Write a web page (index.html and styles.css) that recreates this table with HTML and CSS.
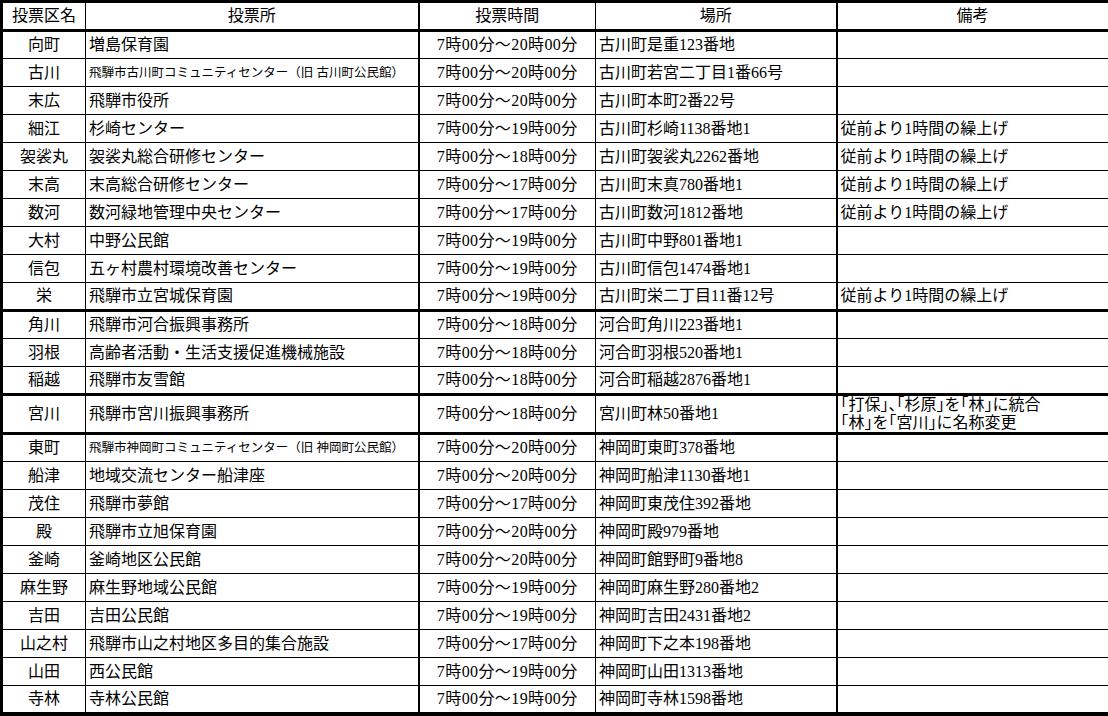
FILE: index.html
```html
<!DOCTYPE html>
<html lang="ja">
<head>
<meta charset="utf-8">
<title>投票所一覧</title>
<link rel="stylesheet" href="styles.css">
</head>
<body>
<table class="sched">
  <colgroup>
    <col class="w-name"><col class="w-place"><col class="w-time"><col class="w-addr"><col class="w-note">
  </colgroup>
  <thead>
    <tr class="hd">
      <th>投票区名</th><th>投票所</th><th>投票時間</th><th>場所</th><th>備考</th>
    </tr>
  </thead>
  <tbody>
    <tr><td class="c-name">向町</td><td class="c-place">増島保育園</td><td class="c-time">7時00分～20時00分</td><td class="c-addr">古川町是重123番地</td><td class="c-note"></td></tr>
    <tr><td class="c-name">古川</td><td class="c-place small">飛騨市古川町コミュニティセンター（旧 古川町公民館）</td><td class="c-time">7時00分～20時00分</td><td class="c-addr">古川町若宮二丁目1番66号</td><td class="c-note"></td></tr>
    <tr><td class="c-name">末広</td><td class="c-place">飛騨市役所</td><td class="c-time">7時00分～20時00分</td><td class="c-addr">古川町本町2番22号</td><td class="c-note"></td></tr>
    <tr><td class="c-name">細江</td><td class="c-place">杉崎センター</td><td class="c-time">7時00分～19時00分</td><td class="c-addr">古川町杉崎1138番地1</td><td class="c-note">従前より1時間の繰上げ</td></tr>
    <tr><td class="c-name">袈裟丸</td><td class="c-place">袈裟丸総合研修センター</td><td class="c-time">7時00分～18時00分</td><td class="c-addr">古川町袈裟丸2262番地</td><td class="c-note">従前より1時間の繰上げ</td></tr>
    <tr><td class="c-name">末高</td><td class="c-place">末高総合研修センター</td><td class="c-time">7時00分～17時00分</td><td class="c-addr">古川町末真780番地1</td><td class="c-note">従前より1時間の繰上げ</td></tr>
    <tr><td class="c-name">数河</td><td class="c-place">数河緑地管理中央センター</td><td class="c-time">7時00分～17時00分</td><td class="c-addr">古川町数河1812番地</td><td class="c-note">従前より1時間の繰上げ</td></tr>
    <tr><td class="c-name">大村</td><td class="c-place">中野公民館</td><td class="c-time">7時00分～19時00分</td><td class="c-addr">古川町中野801番地1</td><td class="c-note"></td></tr>
    <tr><td class="c-name">信包</td><td class="c-place">五ヶ村農村環境改善センター</td><td class="c-time">7時00分～19時00分</td><td class="c-addr">古川町信包1474番地1</td><td class="c-note"></td></tr>
    <tr class="grp-end"><td class="c-name">栄</td><td class="c-place">飛騨市立宮城保育園</td><td class="c-time">7時00分～19時00分</td><td class="c-addr">古川町栄二丁目11番12号</td><td class="c-note">従前より1時間の繰上げ</td></tr>
    <tr><td class="c-name">角川</td><td class="c-place">飛騨市河合振興事務所</td><td class="c-time">7時00分～18時00分</td><td class="c-addr">河合町角川223番地1</td><td class="c-note"></td></tr>
    <tr><td class="c-name">羽根</td><td class="c-place">高齢者活動・生活支援促進機械施設</td><td class="c-time">7時00分～18時00分</td><td class="c-addr">河合町羽根520番地1</td><td class="c-note"></td></tr>
    <tr class="grp-end"><td class="c-name">稲越</td><td class="c-place">飛騨市友雪館</td><td class="c-time">7時00分～18時00分</td><td class="c-addr">河合町稲越2876番地1</td><td class="c-note"></td></tr>
    <tr class="grp-end tall"><td class="c-name">宮川</td><td class="c-place">飛騨市宮川振興事務所</td><td class="c-time">7時00分～18時00分</td><td class="c-addr">宮川町林50番地1</td><td class="c-note two">「打保」、「杉原」を「林」に統合<br>「林」を「宮川」に名称変更</td></tr>
    <tr><td class="c-name">東町</td><td class="c-place small">飛騨市神岡町コミュニティセンター（旧 神岡町公民館）</td><td class="c-time">7時00分～20時00分</td><td class="c-addr">神岡町東町378番地</td><td class="c-note"></td></tr>
    <tr><td class="c-name">船津</td><td class="c-place">地域交流センター船津座</td><td class="c-time">7時00分～20時00分</td><td class="c-addr">神岡町船津1130番地1</td><td class="c-note"></td></tr>
    <tr><td class="c-name">茂住</td><td class="c-place">飛騨市夢館</td><td class="c-time">7時00分～17時00分</td><td class="c-addr">神岡町東茂住392番地</td><td class="c-note"></td></tr>
    <tr><td class="c-name">殿</td><td class="c-place">飛騨市立旭保育園</td><td class="c-time">7時00分～20時00分</td><td class="c-addr">神岡町殿979番地</td><td class="c-note"></td></tr>
    <tr><td class="c-name">釜崎</td><td class="c-place">釜崎地区公民館</td><td class="c-time">7時00分～20時00分</td><td class="c-addr">神岡町館野町9番地8</td><td class="c-note"></td></tr>
    <tr><td class="c-name">麻生野</td><td class="c-place">麻生野地域公民館</td><td class="c-time">7時00分～19時00分</td><td class="c-addr">神岡町麻生野280番地2</td><td class="c-note"></td></tr>
    <tr><td class="c-name">吉田</td><td class="c-place">吉田公民館</td><td class="c-time">7時00分～19時00分</td><td class="c-addr">神岡町吉田2431番地2</td><td class="c-note"></td></tr>
    <tr><td class="c-name">山之村</td><td class="c-place">飛騨市山之村地区多目的集合施設</td><td class="c-time">7時00分～17時00分</td><td class="c-addr">神岡町下之本198番地</td><td class="c-note"></td></tr>
    <tr><td class="c-name">山田</td><td class="c-place">西公民館</td><td class="c-time">7時00分～19時00分</td><td class="c-addr">神岡町山田1313番地</td><td class="c-note"></td></tr>
    <tr><td class="c-name">寺林</td><td class="c-place">寺林公民館</td><td class="c-time">7時00分～19時00分</td><td class="c-addr">神岡町寺林1598番地</td><td class="c-note"></td></tr>
  </tbody>
</table>
</body>
</html>
```

FILE: styles.css
```css
html, body {
  margin: 0;
  padding: 0;
  background: #fff;
}

body {
  font-family: "Liberation Serif", "Noto Sans CJK JP", serif;
  font-size: 16px;
  color: #000;
}

.sched {
  border-collapse: collapse;
  table-layout: fixed;
  width: 1108px;
  border: 3px solid #000;
  border-right-width: 4px;
  border-bottom-width: 4px;
}

.w-name { width: 84px; }
.w-place { width: 333px; }
.w-time { width: 177px; }
.w-addr { width: 241px; }
.w-note { width: 273px; }

.sched th,
.sched td {
  border: 1px solid #000;
  padding: 0 3px;
  line-height: 18px;
  white-space: nowrap;
  overflow: hidden;
  vertical-align: middle;
}

.sched th:nth-child(2),
.sched td:nth-child(2),
.sched th:nth-child(4),
.sched td:nth-child(4) {
  border-right-width: 2px;
}

.hd th {
  height: 26px;
  font-weight: normal;
  text-align: center;
  border-bottom: 3px solid #000;
}

.sched tbody tr {
  height: 28px;
}

.sched tbody tr.tall {
  height: 39px;
}

.sched tr.grp-end td {
  border-bottom: 3px solid #000;
}

.c-name { text-align: center; }
.c-place { text-align: left; }
.c-time { text-align: center; letter-spacing: 0.4px; }
.c-addr { text-align: left; }
.c-note { text-align: left; }

.small {
  font-size: 12.5px;
}

.two {
  line-height: 16px;
  font-feature-settings: "halt";
  vertical-align: bottom;
  padding-bottom: 1px;
}
```
